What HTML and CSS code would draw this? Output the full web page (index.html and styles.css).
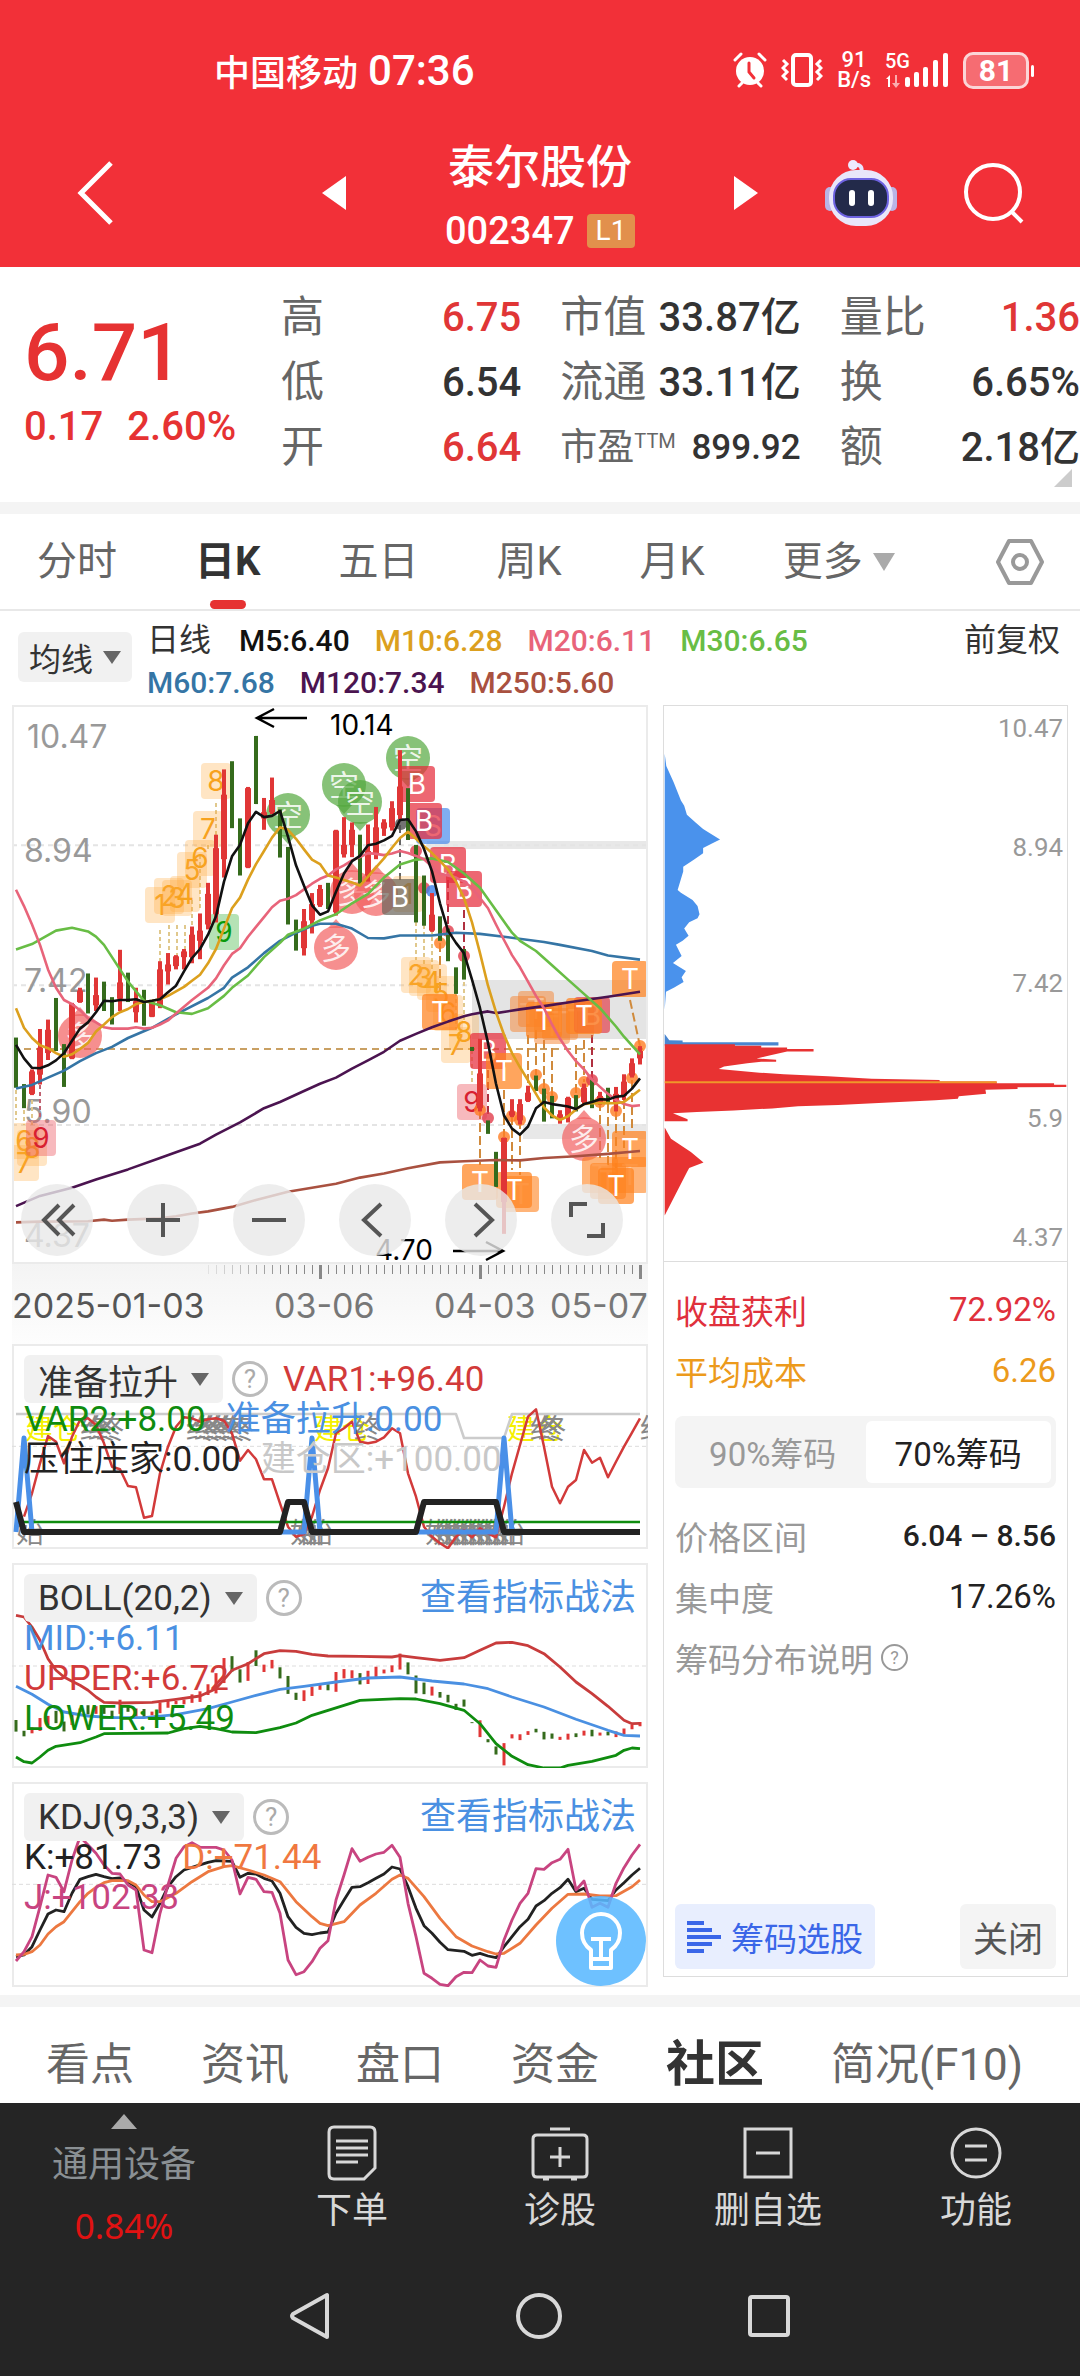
FILE: index.html
```html
<!DOCTYPE html>
<html lang="zh-CN">
<head>
  <meta charset="UTF-8">
  <meta name="viewport" content="width=device-width, initial-scale=1.0">
  <title>泰尔股份 002347</title>
  <link rel="stylesheet" href="styles.css">
</head>
<body>
  <header class="header">
    <div class="status">
      <div class="status__left"><span>中国移动</span><span class="status__time">07:36</span></div>
      <div class="status__right">
        <svg width="34" height="36" viewBox="0 0 34 36" fill="none" stroke="#fff" stroke-width="3" stroke-linecap="round">
          <circle cx="17" cy="19" r="14" fill="#fff" stroke="none"/>
          <path d="M2 8l6-6M32 8l-6-6M6 34l3-3M28 34l-3-3"/>
          <path d="M16 11v9l5 6" stroke="#f23038"/>
        </svg>
        <svg width="42" height="36" viewBox="0 0 42 36" fill="none" stroke="#fff" stroke-width="3">
          <rect x="12" y="3" width="18" height="30" rx="3" stroke-width="4"/>
          <path d="M2 8l4 4-4 4 4 4-4 4 4 4M40 8l-4 4 4 4-4 4 4 4-4 4"/>
        </svg>
        <div class="status__speed"><span>91</span><span>B/s</span></div>
        <div class="status__signal">
          <svg width="64" height="36" viewBox="0 0 64 36" fill="#fff">
            <path d="M1 27l4-4v12H3v-8z"/><path d="M10 23h2v8h3l-4 5-4-5h3z" opacity=".6"/>
            <rect x="20" y="25" width="5" height="10" rx="2"/><rect x="29" y="20" width="5" height="15" rx="2"/>
            <rect x="38" y="15" width="5" height="20" rx="2"/><rect x="48" y="8" width="5" height="27" rx="2"/>
            <rect x="58" y="1" width="5" height="34" rx="2"/>
          </svg>
          <span class="status__net">5G</span>
        </div>
        <div class="battery">81</div>
      </div>
    </div>
    <div class="titlebar">
      <div class="titlebar__side titlebar__side--left">
        <button class="icon-btn" aria-label="返回"><svg width="38" height="66" viewBox="0 0 38 66" fill="none" stroke="#fff" stroke-width="5"><path d="M35 3L5 33l30 30"/></svg></button>
        <button class="icon-btn" aria-label="上一只"><svg width="24" height="36" viewBox="0 0 24 36"><path d="M24 1v34L0 18z" fill="#fff"/></svg></button>
      </div>
      <div class="stock">
        <h1>泰尔股份</h1>
        <div class="stock__code">002347<span class="stock__level">L1</span></div>
      </div>
      <div class="titlebar__side titlebar__side--right">
        <button class="icon-btn" aria-label="下一只"><svg width="24" height="36" viewBox="0 0 24 36"><path d="M0 1v34l24-17z" fill="#fff"/></svg></button>
        <button class="icon-btn" aria-label="智能助手">
          <svg width="72" height="68" viewBox="0 0 72 68">
            <path d="M36 14c2-6-1-9-7-8" fill="none" stroke="#e8e4ff" stroke-width="4"/><circle cx="28" cy="6" r="5" fill="#eeeaff"/>
            <rect x="0" y="28" width="10" height="24" rx="5" fill="#b9b4e6"/><rect x="62" y="28" width="10" height="24" rx="5" fill="#b9b4e6"/>
            <rect x="4" y="11" width="64" height="56" rx="27" fill="#e9e6fa"/>
            <rect x="9" y="20" width="54" height="38" rx="17" fill="#232a4a" stroke="#6d62e0" stroke-width="2"/>
            <rect x="24" y="31" width="6" height="16" rx="3" fill="#fff"/><rect x="43" y="31" width="6" height="16" rx="3" fill="#fff"/>
          </svg>
        </button>
        <button class="icon-btn" aria-label="搜索"><svg width="62" height="62" viewBox="0 0 62 62" fill="none" stroke="#fff" stroke-width="4"><circle cx="30" cy="30" r="27"/><path d="M49 50l10 10"/></svg></button>
      </div>
    </div>
  </header>

  <section class="quote">
    <div class="quote__price">
      <strong>6.71</strong>
      <div class="quote__change"><span>0.17</span><span>2.60%</span></div>
    </div>
    <dl class="quote__col">
      <div><dt>高</dt><dd class="up">6.75</dd></div>
      <div><dt>低</dt><dd>6.54</dd></div>
      <div><dt>开</dt><dd class="up">6.64</dd></div>
    </dl>
    <dl class="quote__col">
      <div><dt>市值</dt><dd>33.87亿</dd></div>
      <div><dt>流通</dt><dd>33.11亿</dd></div>
      <div class="quote__small"><dt>市盈<sup>TTM</sup></dt><dd>899.92</dd></div>
    </dl>
    <dl class="quote__col">
      <div><dt>量比</dt><dd class="up">1.36</dd></div>
      <div><dt>换</dt><dd>6.65%</dd></div>
      <div><dt>额</dt><dd>2.18亿</dd></div>
    </dl>
  </section>

  <nav class="period">
    <a href="#">分时</a>
    <a href="#" class="period--active">日K</a>
    <a href="#">五日</a>
    <a href="#">周K</a>
    <a href="#">月K</a>
    <a href="#" class="period__more">更多<i class="caret caret--light"></i></a>
    <button class="icon-btn period__set" aria-label="设置">
      <svg width="50" height="48" viewBox="0 0 50 48" fill="none" stroke="#999" stroke-width="4"><path d="M14 3h22l11 21-11 21H14L3 24z" stroke-linejoin="round"/><circle cx="25" cy="24" r="7"/></svg>
    </button>
  </nav>

  <section class="ma">
    <button class="chip chip--small">均线<i class="caret"></i></button>
    <div class="ma__list">
      <span class="ma__name">日线</span><span class="c-black">M5:6.40</span><span class="c-orange">M10:6.28</span><span class="c-pink">M20:6.11</span><span class="c-green">M30:6.65</span>
      <br>
      <span class="c-blue">M60:7.68</span><span class="c-purple">M120:7.34</span><span class="c-brown">M250:5.60</span>
    </div>
    <a href="#" class="ma__adjust">前复权</a>
  </section>

  <main class="charts">
    <div class="charts__left">
      <div class="kline">
        <svg id="kline" viewBox="12 705 636 559"></svg>
        <div class="kline__tools">
          <button aria-label="最早"><svg viewBox="0 0 40 40"><path d="M22 5L7 20l15 15M37 5L22 20l15 15"/></svg></button>
          <button aria-label="放大"><svg viewBox="0 0 40 40"><path d="M20 3v34M3 20h34"/></svg></button>
          <button aria-label="缩小"><svg viewBox="0 0 40 40"><path d="M3 20h34"/></svg></button>
          <button aria-label="左移"><svg viewBox="0 0 40 40"><path d="M26 4L9 20l17 16"/></svg></button>
          <button aria-label="右移"><svg viewBox="0 0 40 40"><path d="M14 4l17 16-17 16"/></svg></button>
          <button aria-label="全屏"><svg viewBox="0 0 40 40"><path d="M4 17V4h16M36 23v13H20"/></svg></button>
        </div>
      </div>
      <div class="axis">
        <svg id="ticks" viewBox="12 0 636 16"></svg>
        <div class="axis__dates"><span>2025-01-03</span><span>03-06</span><span>04-03</span><span>05-07</span></div>
      </div>

      <div class="panel">
        <svg id="lift" class="panel__plot" viewBox="12 0 636 205"></svg>
        <div class="panel__head">
          <button class="chip">准备拉升<i class="caret"></i></button>
          <button class="help" aria-label="说明">?</button>
          <span class="c-red">VAR1:+96.40</span>
        </div>
        <div class="panel__row"><span class="c-lower">VAR2:+8.00</span><span class="c-sky">准备拉升:0.00</span></div>
        <div class="panel__row"><span class="c-ink">压住庄家:0.00</span><span class="c-gray">建仓区:+100.00</span></div>
      </div>

      <div class="panel">
        <svg id="boll" class="panel__plot" viewBox="12 0 636 205"></svg>
        <div class="panel__head">
          <button class="chip">BOLL(20,2)<i class="caret"></i></button>
          <button class="help" aria-label="说明">?</button>
          <a href="#" class="panel__link">查看指标战法</a>
        </div>
        <div class="panel__row"><span class="c-sky">MID:+6.11</span></div>
        <div class="panel__row"><span class="c-red">UPPER:+6.72</span></div>
        <div class="panel__row"><span class="c-lower">LOWER:+5.49</span></div>
      </div>

      <div class="panel">
        <svg id="kdj" class="panel__plot" viewBox="12 0 636 205"></svg>
        <div class="panel__head">
          <button class="chip">KDJ(9,3,3)<i class="caret"></i></button>
          <button class="help" aria-label="说明">?</button>
          <a href="#" class="panel__link">查看指标战法</a>
        </div>
        <div class="panel__row"><span class="c-ink">K:+81.73</span><span class="c-d">D:+71.44</span></div>
        <div class="panel__row"><span class="c-j">J:+102.33</span></div>
        <button class="bulb" aria-label="提示">
          <svg width="44" height="60" viewBox="0 0 44 60" fill="none" stroke="#fff" stroke-width="4" stroke-linejoin="round"><path d="M12 48V39C5 34 3 28 3 22a19 19 0 0 1 38 0c0 6-2 12-9 17v9zM12 48v9h20v-9M12 28h20M22 28v20"/></svg>
        </button>
      </div>
    </div>

    <aside class="cost">
      <svg id="cost" viewBox="663 705 405 558"></svg>
      <div class="cost__info">
        <div class="cost__row c-win"><span>收盘获利</span><span>72.92%</span></div>
        <div class="cost__row c-avg"><span>平均成本</span><span>6.26</span></div>
        <div class="switch"><button>90%筹码</button><button class="switch--on">70%筹码</button></div>
        <div class="cost__row"><span>价格区间</span><b>6.04 – 8.56</b></div>
        <div class="cost__row"><span>集中度</span><em>17.26%</em></div>
        <div class="cost__row cost__note"><span>筹码分布说明</span><button class="help help--small" aria-label="说明">?</button></div>
        <div class="cost__actions">
          <button class="cost__pick"><svg width="34" height="32" viewBox="0 0 34 32" stroke="#3a66e8" stroke-width="4"><path d="M0 2h17M0 9h25M0 16h34M0 23h25M0 30h17"/></svg>筹码选股</button>
          <button class="cost__close">关闭</button>
        </div>
      </div>
    </aside>
  </main>

  <nav class="tabs">
    <a href="#">看点</a>
    <a href="#">资讯</a>
    <a href="#">盘口</a>
    <a href="#">资金</a>
    <a href="#" class="tabs--active">社区</a>
    <a href="#">简况(F10)</a>
  </nav>

  <footer class="footer">
    <div class="toolbar">
      <a href="#" class="toolbar__index"><i class="caret caret--up"></i><span>通用设备</span><b>0.84%</b></a>
      <a href="#"><svg width="50" height="56" viewBox="0 0 50 56"><path d="M7 2h36q5 0 5 5v36L37 54H7q-5 0-5-5V7q0-5 5-5zM9 16h32M9 23h32M9 30h32M9 37h22"/></svg>下单</a>
      <a href="#"><svg width="58" height="56" viewBox="0 0 58 56"><path d="M19 4h20M6 10h46q4 0 4 4v34q0 4-4 4H6q-4 0-4-4V14q0-4 4-4zM29 22v20M19 32h20M12 54h6M40 54h6"/></svg>诊股</a>
      <a href="#"><svg width="50" height="56" viewBox="0 0 50 56"><path d="M2 4h46v48H2zM13 28h24"/></svg>删自选</a>
      <a href="#"><svg width="52" height="56" viewBox="0 0 52 56"><circle cx="26" cy="28" r="24"/><path d="M15 21h22M15 35h22"/></svg>功能</a>
    </div>
    <div class="system">
      <button class="icon-btn" aria-label="返回"><svg width="42" height="50" viewBox="0 0 42 50"><path d="M38 4v42L4 27q-2-2 0-4z"/></svg></button>
      <button class="icon-btn" aria-label="主页"><svg width="48" height="50" viewBox="0 0 48 50"><circle cx="24" cy="25" r="21"/></svg></button>
      <button class="icon-btn" aria-label="最近"><svg width="44" height="50" viewBox="0 0 44 50"><rect x="3" y="6" width="38" height="38" rx="2"/></svg></button>
    </div>
  </footer>
  <script src="chart.js"></script>
</body>
</html>
```
FILE: styles.css
```css
* {
  box-sizing: border-box;
}

body {
  margin: 0;
  background: #fff;
  color: #333;
  font-family: Roboto, "Noto Sans CJK SC", sans-serif;
}

a {
  color: inherit;
  text-decoration: none;
}

button {
  padding: 0;
  border: none;
  background: none;
  color: inherit;
  font: inherit;
}

svg {
  display: block;
}

/* header */
.header {
  background: #f23038;
  color: #fff;
}

.status {
  display: flex;
  justify-content: space-between;
  align-items: center;
  height: 118px;
  padding: 22px 45px 0 214px;
  font-size: 36px;
}

.status__left,
.status__right {
  display: flex;
  align-items: center;
}

.status__left {
  gap: 10px;
  font-weight: 500;
}

.status__time {
  font-size: 42px;
}

.status__right {
  gap: 14px;
}

.status__speed {
  display: flex;
  flex-direction: column;
  align-items: center;
  font-size: 22px;
  line-height: 20px;
  font-weight: 500;
}

.status__signal {
  position: relative;
}

.status__net {
  position: absolute;
  top: -1px;
  left: 0;
  font-size: 20px;
  line-height: 20px;
  font-weight: 500;
}

.battery {
  position: relative;
  width: 66px;
  height: 37px;
  margin-right: 6px;
  border: 3px solid #fbd5d7;
  border-radius: 10px;
  background: #f66c72;
  font-size: 30px;
  line-height: 32px;
  font-weight: 700;
  text-align: center;
}

.battery::after {
  content: "";
  position: absolute;
  top: 10px;
  right: -8px;
  width: 3px;
  height: 12px;
  border-radius: 2px;
  background: #fff;
}

.titlebar {
  display: grid;
  grid-template-columns: 1fr 190px 1fr;
  align-items: center;
  height: 149px;
}

.titlebar__side {
  display: flex;
  justify-content: space-between;
  align-items: center;
}

.titlebar__side--left {
  padding: 0 99px 0 76px;
}

.titlebar__side--right {
  padding: 0 55px 0 99px;
}

.stock {
  padding-top: 14px;
  text-align: center;
}

.stock h1 {
  margin: 0;
  font-size: 46px;
  line-height: 62px;
  font-weight: 500;
  white-space: nowrap;
}

.stock__code {
  display: flex;
  justify-content: space-between;
  align-items: center;
  font-size: 38px;
  line-height: 66px;
  font-weight: 500;
}

.stock__level {
  width: 48px;
  border-radius: 4px;
  background: #e2904c;
  font-size: 28px;
  line-height: 34px;
  font-weight: 400;
}

/* quote */
.quote {
  position: relative;
  display: grid;
  grid-template-columns: 242px 1fr 1fr 1fr;
  gap: 39px;
  height: 247px;
  padding-top: 18px;
  border-bottom: 12px solid #f4f4f4;
}

.quote::after {
  content: "";
  position: absolute;
  right: 8px;
  bottom: 15px;
  border-left: 18px solid transparent;
  border-bottom: 18px solid #ccc;
}

.quote__price {
  padding: 22px 0 0 24px;
  color: #e63232;
  font-weight: 500;
  white-space: nowrap;
}

.quote__price strong {
  display: block;
  font-size: 80px;
  line-height: 92px;
  font-weight: 500;
}

.quote__change {
  display: flex;
  gap: 24px;
  font-size: 40px;
  line-height: 56px;
}

.quote__col {
  margin: 0;
  font-size: 40px;
  line-height: 65px;
}

.quote__col div {
  display: flex;
  justify-content: space-between;
  height: 65px;
}

.quote__col dt {
  color: #666;
  font-size: 43px;
}

.quote__col dd {
  margin: 0;
  font-weight: 500;
  white-space: nowrap;
}

.quote__col .up {
  color: #e03636;
}

.quote__small dt {
  display: flex;
  font-size: 37px;
}

.quote__small dd {
  font-size: 35px;
}

.quote__small sup {
  font-size: 20px;
  line-height: 52px;
}

/* period tabs */
.period {
  display: flex;
  align-items: center;
  gap: 78px;
  height: 97px;
  padding: 0 35px 0 37px;
  border-bottom: 2px solid #e8e8e8;
  color: #666;
  font-size: 40px;
  line-height: 95px;
  white-space: nowrap;
}

.period--active {
  position: relative;
  color: #333;
  font-weight: 700;
}

.period--active::after {
  content: "";
  position: absolute;
  left: 50%;
  bottom: 0;
  width: 36px;
  height: 9px;
  margin-left: -18px;
  border-radius: 5px;
  background: #e63232;
}

.period__more {
  display: flex;
  align-items: center;
  gap: 10px;
}

.period__set {
  margin-left: auto;
}

.caret {
  display: inline-block;
  border: 9px solid transparent;
  border-top: 13px solid #666;
  border-bottom: none;
}

.caret--light {
  border-width: 18px 11px 0;
  border-top-color: #aaa;
}

.caret--up {
  border-width: 0 13px 15px;
  border-bottom: 15px solid #aaa;
}

/* moving averages */
.ma {
  display: flex;
  align-items: flex-start;
  height: 94px;
  padding: 8px 20px 0 18px;
  font-size: 30px;
}

.ma__list {
  flex: 1;
  margin-left: 15px;
  line-height: 42px;
  font-weight: 500;
  white-space: nowrap;
}

.ma__list span {
  margin-right: 25px;
}

.ma__list .ma__name {
  margin-right: 28px;
  font-size: 32px;
  font-weight: 400;
}

.ma__adjust {
  font-size: 32px;
  line-height: 42px;
}

.chip {
  display: flex;
  align-items: center;
  gap: 13px;
  height: 48px;
  padding: 0 14px;
  border-radius: 6px;
  background: #f1f1f1;
  color: #333;
  font-size: 35px;
}

.chip--small {
  gap: 10px;
  height: 50px;
  margin-top: 13px;
  padding: 0 11px;
  font-size: 32px;
}

.help {
  flex: none;
  width: 36px;
  height: 36px;
  border: 3px solid #bbb;
  border-radius: 50%;
  color: #aaa;
  font-size: 26px;
  line-height: 30px;
}

.help--small {
  width: 27px;
  height: 27px;
  border-width: 2px;
  border-color: #999;
  color: #999;
  font-size: 18px;
  line-height: 22px;
}

/* charts */
.charts {
  display: grid;
  grid-template-columns: 636fr 405fr;
  gap: 15px;
  padding: 0 12px;
}

.kline {
  position: relative;
}

.kline__tools {
  position: absolute;
  left: 9px;
  bottom: 8px;
  display: flex;
  gap: 34px;
}

.kline__tools button {
  display: flex;
  justify-content: center;
  align-items: center;
  width: 72px;
  height: 72px;
  border-radius: 50%;
  background: rgba(232, 232, 232, 0.8);
}

.kline__tools svg {
  width: 40px;
  fill: none;
  stroke: #555;
  stroke-width: 4;
}

.axis {
  height: 80px;
  background: linear-gradient(#f4f4f4, #fdfdfd);
}

.axis__dates {
  display: grid;
  grid-template-columns: 1fr 160px 116px 98px;
  color: #777;
  font-family: Inter, sans-serif;
  font-size: 34px;
  line-height: 52px;
  white-space: nowrap;
}

.axis__dates span:first-child {
  color: #555;
}

.panel {
  position: relative;
  aspect-ratio: 636 / 205;
  margin-bottom: 14px;
  padding: 11px 12px 0;
  font-size: 35px;
}

.panel:last-child {
  margin-bottom: 0;
}

.panel__plot {
  position: absolute;
  inset: 0;
  width: 100%;
  height: 100%;
}

.panel__head {
  position: relative;
  display: flex;
  align-items: center;
  gap: 9px;
}

.panel__head .c-red {
  margin-left: 6px;
}

.panel__link {
  margin-left: auto;
  color: #4a90e2;
  font-size: 36px;
  line-height: 48px;
}

.panel__row {
  position: relative;
  display: flex;
  gap: 20px;
  height: 40px;
  line-height: 34px;
  white-space: nowrap;
}

.bulb {
  position: absolute;
  right: 2px;
  bottom: 1px;
  display: flex;
  justify-content: center;
  align-items: center;
  width: 90px;
  height: 90px;
  border-radius: 50%;
  background: rgba(90, 184, 255, 0.88);
}

/* cost distribution */
.cost {
  display: flex;
  flex-direction: column;
  margin-bottom: 10px;
  border: 1px solid #ddd;
}

.cost__info {
  flex: 1;
  display: flex;
  flex-direction: column;
  padding: 17px 11px 7px;
  border-top: 1px solid #ddd;
  color: #999;
  font-size: 33px;
}

.cost__row {
  display: flex;
  justify-content: space-between;
  align-items: center;
  height: 61px;
}

.cost__row b {
  color: #222;
  font-size: 30px;
  font-weight: 500;
}

.cost__row em {
  color: #222;
  font-style: normal;
}

.cost__note {
  justify-content: flex-start;
  gap: 8px;
}

.switch {
  display: grid;
  grid-template-columns: 1fr 1fr;
  height: 72px;
  margin: 15px 0 17px;
  padding: 5px;
  border-radius: 8px;
  background: #f4f4f4;
}

.switch--on {
  border-radius: 6px;
  background: #fff;
  color: #222;
}

.cost__actions {
  display: flex;
  justify-content: space-between;
  margin-top: auto;
}

.cost__actions button {
  height: 65px;
  border-radius: 6px;
}

.cost__pick {
  display: flex;
  align-items: center;
  gap: 10px;
  padding: 0 12px;
  background: #e8eefe;
  color: #3a66e8;
}

.cost__actions .cost__close {
  width: 96px;
  background: #f4f4f4;
  color: #555;
  font-size: 35px;
}

/* bottom tabs */
.tabs {
  display: flex;
  align-items: center;
  gap: 67px;
  height: 108px;
  margin-top: 8px;
  padding: 19px 0 0 46px;
  border-top: 12px solid #f4f4f4;
  color: #666;
  font-size: 44px;
  line-height: 60px;
  white-space: nowrap;
}

.tabs .tabs--active {
  color: #333;
  font-size: 49px;
  font-weight: 700;
}

.footer {
  background: #252525;
  color: #d8d8d8;
}

.toolbar {
  display: grid;
  grid-template-columns: 248fr repeat(4, 208fr);
  height: 153px;
  font-size: 36px;
}

.toolbar a {
  display: flex;
  flex-direction: column;
  align-items: center;
  padding-top: 22px;
  line-height: 60px;
}

.toolbar svg,
.system svg {
  fill: none;
  stroke: #d8d8d8;
  stroke-width: 3;
}

.toolbar .toolbar__index {
  padding-top: 11px;
  color: #8a9094;
}

.toolbar__index span {
  line-height: 72px;
}

.toolbar__index b {
  color: #e01212;
  font-family: "Noto Sans", sans-serif;
  font-size: 35px;
  line-height: 50px;
  font-weight: 400;
}

.system {
  display: flex;
  justify-content: center;
  align-items: center;
  gap: 184px;
  height: 120px;
}

.system svg {
  stroke-width: 4;
  stroke-linejoin: round;
}

/* series colours */
.c-black { color: #111; }
.c-ink { color: #222; }
.c-orange { color: #dca01e; }
.c-pink { color: #e8647a; }
.c-green { color: #68bd45; }
.c-blue { color: #3575a5; }
.c-purple { color: #4b1450; }
.c-brown { color: #a95140; }
.c-red { color: #d23a3a; }
.c-lower { color: #0f8c0f; }
.c-sky { color: #4a90e2; }
.c-gray { color: #c8c8c8; }
.c-d { color: #f07840; }
.c-j { color: #c84480; }
.c-win { color: #e0303c; }
.c-avg { color: #ec9a1c; }
```
FILE: chart.js
```js
// [high, top, bottom, low, up?] in scale units, one per trading day
const candles = [
  [827,840,945,950,0],[941,950,975,1000,0],[905,910,965,968,1],[806,852,918,942,1],[783,808,865,882,1],[730,828,855,860,0],
  [843,868,890,948,0],[742,745,878,880,1],[705,712,740,742,1],[670,712,740,768,0],[680,723,748,762,1],[690,702,732,762,0],
  [728,738,755,795,0],[612,692,732,762,1],[668,682,715,740,0],[705,738,765,790,1],[710,738,795,798,0],[738,740,776,777,1],
  [640,660,750,755,1],[620,648,665,697,1],[625,628,652,660,1],[610,616,630,660,1],[555,575,630,645,1],[523,565,590,635,1],
  [448,475,550,562,1],[330,363,525,545,1],[170,232,390,435,1],[150,228,258,314,0],[290,302,415,430,0],[213,216,410,412,1],
  [88,115,238,255,0],[240,275,290,318,1],[190,245,275,280,1],[268,275,348,386,0],[360,362,548,550,0],[538,560,572,614,0],
  [512,542,608,626,1],[473,500,540,572,1],[453,463,503,507,1],[448,470,500,512,0],[318,320,520,528,1],[287,355,378,386,1],
  [300,318,355,385,1],[330,350,408,450,0],[305,370,430,445,1],[262,312,378,390,1],[292,300,315,333,1],[248,265,312,320,1],
  [123,212,282,292,1],[216,258,318,343,0],[355,368,530,545,0],[430,475,535,553,0],[473,526,565,568,1],[530,545,585,590,0],
  [560,575,630,640,0],[655,660,690,720,0],[610,635,665,685,0],[850,852,856,860,0],[830,915,1000,1008,1],[1030,1040,1055,1063,0],
  [1107,1130,1185,1193,0],[1072,1073,1230,1308,1],[978,1008,1018,1022,1],[978,990,1030,1040,1],[945,962,982,985,1],[920,932,950,958,0],
  [952,970,1010,1033,0],[970,990,1010,1025,0],[1005,1015,1025,1038,1],[972,975,1020,1035,1],[968,975,1000,1008,0],[940,950,985,992,1],
  [930,950,990,1000,0],[960,970,988,992,1],[950,965,985,990,0],[948,965,990,1008,1],[917,935,970,980,1],[878,890,920,925,1],[848,860,878,893,1]
];

// "day,value day,value ..." pairs
const ma = [
  ['#a95140', '0,1280 3,1278 9,1277 11,1273 12,1276 14,1273 18,1270 20,1265 22,1258 24,1253 27,1242 30,1225 34,1205 37,1195 40,1185 43,1170 46,1160 49,1147 53,1133 56,1130 60,1127 63,1128 66,1122 70,1118 74,1112 78,1105'],
  ['#4b1450', '0,1240 3,1215 7,1195 10,1175 14,1150 18,1122 20,1108 23,1087 25,1065 28,1035 31,1000 33,985 36,958 38,940 40,925 42,903 44,883 46,862 48,835 50,818 52,802 54,788 56,775 57,770 59,763 60,767 63,758 66,750 70,738 74,727 78,715'],
  ['#3575a5', '0,952 2,943 4,925 6,908 8,885 10,865 12,850 14,828 17,803 20,770 24,730 26,705 27,680 29,655 31,620 33,590 35,570 37,553 38,548 40,548 42,560 44,583 46,584 48,577 52,577 55,570 58,573 61,580 66,593 68,600 72,615 74,626 78,636'],
  ['#68bd45', '0,611 2,598 5,565 7,558 9,567 10,580 11,600 12,630 13,660 14,690 16,737 18,748 20,765 22,769 24,755 26,725 27,705 29,675 31,630 33,595 34,575 36,560 38,540 40,525 42,498 44,475 46,435 48,403 50,391 52,388 54,397 56,425 58,460 60,515 62,570 63,590 65,615 67,650 69,685 71,720 73,755 75,800 76,825 78,868'],
  ['#e8647a', '0,465 1,505 2,550 3,600 4,660 5,705 6,735 7,745 8,760 9,780 10,790 11,802 12,805 14,805 15,802 16,805 17,803 18,795 19,785 20,768 22,735 24,705 25,682 26,650 27,622 28,608 29,580 30,556 31,532 32,508 33,492 34,487 35,478 36,464 37,450 38,438 39,430 40,415 41,405 42,393 43,385 44,375 45,377 46,380 47,376 48,370 49,375 50,382 51,390 52,408 53,425 54,430 55,435 56,445 57,460 58,485 59,510 60,550 61,588 62,625 63,655 64,690 65,725 66,755 67,795 68,830 69,860 70,885 71,905 72,930 73,948 74,965 75,980 76,990 77,995 78,993'],
  ['#dca01e', '0,755 1,803 2,828 3,846 4,853 5,865 6,874 7,868 8,855 9,840 10,812 11,795 12,777 13,765 14,757 15,745 16,740 17,737 18,733 19,725 20,714 21,703 22,688 23,673 24,645 25,610 26,560 27,510 28,484 29,440 30,402 31,370 32,337 33,312 34,318 35,340 36,366 37,391 38,402 39,430 40,435 41,441 42,447 43,455 44,433 45,410 46,388 47,362 48,338 49,323 50,340 51,358 52,375 53,395 54,415 55,445 56,485 57,545 58,620 59,700 60,765 61,820 62,865 63,900 64,932 65,965 66,998 67,1018 68,1029 69,1020 70,1003 71,990 72,987 75,988 76,985 77,970 78,955'],
  ['#111', '0,845 1,878 2,901 3,902 4,895 5,883 6,865 7,835 8,805 9,790 10,765 11,737 12,738 13,735 14,735 15,733 16,740 17,737 18,733 19,716 20,700 21,665 22,632 23,610 24,575 25,530 26,445 27,383 28,355 29,302 30,274 31,287 32,284 33,272 34,335 35,405 36,455 37,503 38,526 39,518 40,470 41,425 42,395 43,382 44,356 45,352 46,344 47,333 48,294 49,292 50,322 51,365 52,420 53,498 54,565 55,595 56,620 57,685 58,755 59,840 60,940 61,1018 62,1050 63,1065 64,1045 65,1000 66,985 67,990 68,993 69,996 70,1002 71,990 72,985 73,978 74,979 75,972 76,970 77,952 78,927']
];

const dayX = i => 16 + 8 * i;
const priceY = v => 700 + v / 2.45;
const UP = '#e03636';
const DOWN = '#356b1c';

function points(data, toY) {
  return data.split(' ').map(p => {
    const [i, v] = p.split(',').map(Number);
    return dayX(i) + ',' + toY(v).toFixed(1);
  }).join(' ');
}

function line(data, color, width, toY) {
  return `<polyline points="${points(data, toY)}" fill="none" stroke="${color}" stroke-width="${width}" stroke-linejoin="round"/>`;
}

function seg(x1, y1, x2, y2, color, width, dash) {
  return `<line x1="${x1}" y1="${y1}" x2="${x2}" y2="${y2}" stroke="${color}" stroke-width="${width}" stroke-dasharray="${dash || 'none'}"/>`;
}

function text(x, y, str, color, size, anchor, font) {
  return `<text x="${x}" y="${y}" fill="${color}" font-size="${size}" text-anchor="${anchor || 'start'}" font-family="${font || 'Inter'}, 'Noto Sans CJK SC', sans-serif">${str}</text>`;
}

// square flag with its letter
function tag(x, y, str, fill, color, w) {
  return `<rect x="${x - w / 2}" y="${y - 18}" width="${w}" height="36" rx="4" fill="${fill}"/>` + text(x, y + 10, str, color, 28, 'middle');
}

function badge(x, y, str, fill, dir) {
  return `<circle cx="${x}" cy="${y}" r="22" fill="${fill}"/><path d="M${x - 8} ${y + 20 * dir}h16l-8 ${9 * dir}z" fill="${fill}"/>` +
    text(x, y + 11, str, 'rgba(255,255,255,.85)', 30, 'middle');
}

function drawKline() {
  let s = '';
  s += '<rect x="427" y="841" width="221" height="8" fill="#e8e8e8"/><rect x="472" y="980" width="176" height="59" fill="#e4e4e4"/><rect x="523" y="1124" width="125" height="15" fill="#e8e8e8"/>';
  [356, 699, 1041].forEach(v => { s += seg(12, priceY(v), 648, priceY(v), '#e4e4e4', 2, '5 4'); });
  s += seg(12, priceY(855), 648, priceY(855), '#c9a063', 2, '7 5');
  [['10.47', 27, 748], ['8.94', 24, 862], ['7.42', 24, 992], ['5.90', 24, 1123], ['4.37', 24, 1247]].forEach(t => {
    s += text(t[1], t[2], t[0], '#999', 32);
  });

  // guide lines down to the markers
  [[208,845,852],[200,855,910],[192,900,935],[185,925,950],[177,925,955],[169,925,955],[160,930,965],[216,803,835],[24,1110,1125],[32,1100,1125],
   [416,922,960],[424,925,965],[432,930,970],[16,1090,1120],[456,985,1030],[464,982,1020],[472,1050,1085]].forEach(g => {
    s += seg(g[0], g[1], g[0], g[2], '#e0c88c', 2, '4 3');
  });
  s += seg(400, 825, 400, 880, '#666', 2, '8 4') + seg(464, 910, 464, 955, '#b03040', 2, '8 4') + seg(448, 880, 448, 930, '#b03040', 2, '8 4') +
    seg(40, 1085, 40, 1120, '#c06070', 2, '4 3') + seg(488, 1070, 488, 1118, '#b03040', 2, '8 4') + seg(592, 1035, 592, 1080, '#b03040', 2, '8 4');
  [[440,943,995],[480,1110,1165],[504,1090,1137],[512,1116,1170],[520,1120,1175],[528,1035,1090],[536,1030,1075],[544,1040,1089],[552,1048,1097],
   [576,1045,1093],[584,1040,1082],[600,1102,1158],[608,1104,1165],[616,1111,1168],[624,1100,1150],[632,1080,1130]].forEach(g => {
    s += seg(g[0], g[1], g[0], g[2], '#d08a3c', 2, '9 4');
  });
  s += seg(630, 1000, 640, 1046, '#d08a3c', 2, '9 4');

  // long / short circles
  const green = 'rgba(84,168,62,.7)';
  const red = 'rgba(242,95,95,.7)';
  s += badge(288, 815, '空', green, 1) + badge(344, 785, '空', green, 1) + badge(360, 802, '空', green, 1) + badge(408, 758, '空', green, 1);
  s += badge(80, 1036, '多', red, -1) + badge(352, 892, '多', red, -1) + badge(376, 894, '多', red, -1) + badge(336, 948, '多', red, -1) + badge(584, 1139, '多', red, -1);

  // nine-turn counts
  [[160,905,1],[169,896,2],[177,898,3],[185,894,4],[192,870,5],[200,858,6],[208,829,7],[216,781,8],[24,1141,6],[24,1163,7],[32,1148,8],
   [408,894,1],[416,975,2],[424,978,3],[432,982,4],[441,994,5],[448,1013,6],[456,1045,7],[464,1032,8]].forEach(n => {
    s += tag(n[0], n[1], n[2], 'rgba(255,170,60,.3)', '#f7a21e', 30);
  });
  s += tag(224, 932, 9, 'rgba(90,190,90,.45)', '#0a9a0a', 30) + tag(41, 1138, 9, 'rgba(235,80,90,.4)', '#d82030', 30) + tag(472, 1102, 9, 'rgba(235,80,90,.4)', '#d82030', 30);

  // trade flags
  [[528,1014],[536,1009],[552,1026],[560,1022],[576,1020]].forEach(t => { s += tag(t[0], t[1], 'T', 'rgba(245,130,45,.5)', 'rgba(255,255,255,.4)', 36); });
  [[600,1175],[608,1181],[630,1175],[521,1194]].forEach(t => { s += tag(t[0], t[1], 'T', 'rgba(255,130,30,.6)', 'rgba(255,255,255,.3)', 36); });
  s += tag(433, 826, 'S', 'rgba(60,130,235,.65)', '#fff', 34);
  s += tag(592, 1015, 'B', 'rgba(225,50,65,.65)', 'rgba(255,255,255,.5)', 36);
  [[417,784],[424,821],[448,865],[464,889],[488,1051]].forEach(t => { s += tag(t[0], t[1], 'B', 'rgba(230,45,60,.72)', '#fff', 36); });
  s += tag(400, 897, 'B', 'rgba(105,100,90,.7)', '#fff', 36);
  [[440,1012],[504,1071],[480,1182],[514,1190],[544,1020],[584,1016],[630,979],[630,1149],[616,1186]].forEach(t => {
    s += tag(t[0], t[1], 'T', 'rgba(255,130,30,.72)', '#fff', 36);
  });

  [[440,943],[480,1110],[504,1137],[512,1116],[520,1120],[536,1075],[544,1089],[552,1097],[576,1093],[584,1082],[600,1102],[616,1111],[632,1078],[640,1046]].forEach(d => {
    s += `<circle cx="${d[0]}" cy="${d[1]}" r="6" fill="rgba(255,125,35,.8)"/>`;
  });
  [[416,851],[424,888],[448,931],[464,956],[488,1118],[592,1080]].forEach(d => { s += `<circle cx="${d[0]}" cy="${d[1]}" r="6" fill="rgba(225,60,75,.8)"/>`; });
  s += '<circle cx="432" cy="891" r="6" fill="rgba(60,130,235,.8)"/><circle cx="401" cy="824" r="6" fill="rgba(80,80,80,.8)"/>';

  candles.forEach((c, i) => {
    const color = c[4] ? UP : DOWN;
    s += seg(dayX(i), priceY(c[0]), dayX(i), priceY(c[3]), color, 4) + seg(dayX(i), priceY(c[1]), dayX(i), priceY(c[2]), color, c[4] ? 6 : 4);
  });
  ma.forEach(m => { s += line(m[1], m[0], 2.6, priceY); });

  s += text(330, 735, '10.14', '#000', 28) + text(375, 1260, '4.70', '#000', 28);
  s += '<path d="M307 718h-50M274 709l-17 9 17 9M453 1251h50M486 1242l17 9-17 9" fill="none" stroke="#000" stroke-width="2.5"/>';
  s += '<rect x="13" y="706" width="634" height="557" fill="none" stroke="#ebebeb" stroke-width="2"/>';
  document.getElementById('kline').innerHTML = s;
}

function drawTicks() {
  let s = '';
  for (let i = 24; i < 79; i++) {
    const major = i === 38 || i === 58 || i === 78;
    s += `<rect x="${dayX(i) - (major ? 1 : 0)}" y="1" width="${major ? 3 : 1}" height="${major ? 14 : 9}" fill="#888" opacity="${Math.min(1, (i - 22) / 12)}"/>`;
  }
  document.getElementById('ticks').innerHTML = s;
}

const frame = '<rect x="13" y="1" width="634" height="203" fill="none" stroke="#ebebeb" stroke-width="2"/>';

function drawLift() {
  const y = v => (v - 42) / 3;
  let s = frame + seg(12, y(349), 648, y(349), '#ddd', 1, '4 3');
  [25, 314, 507].forEach(x => { s += text(x, 95, '建仓', '#f5f000', 28); });
  [80, 88, 96, 186, 194, 202, 210, 218, 226, 354, 530, 538, 640].forEach(x => { s += text(x, 95, '终', '#888', 28); });
  [16, 290, 297, 305, 425, 433, 441, 449, 457, 465, 473, 481, 489, 497].forEach(x => { s += text(x, 199, '始', '#888', 28); });
  s += line('0,252 55,252 56,324 61,324 62,252 78,252', '#ccc', 2.5, y);
  s += line('1,560 2,490 3,400 4,318 5,335 6,400 7,320 8,270 9,265 10,285 11,340 12,410 13,418 14,468 15,472 16,563 17,558 18,430 19,350 20,290 21,262 22,265 23,275 24,268 25,265 26,272 27,310 28,392 29,360 30,388 31,448 32,448 33,520 34,590 35,620 36,612 37,560 38,480 39,415 40,310 41,295 42,275 43,335 44,340 45,335 46,322 47,295 48,310 49,430 50,500 51,590 52,620 53,640 54,655 55,620 56,600 57,622 58,595 59,610 60,622 61,530 62,430 63,345 64,260 65,238 66,350 67,470 68,520 69,470 70,450 71,360 72,398 73,383 74,442 75,395 76,350 77,308 78,265', '#d23a3a', 2.5, y);
  s += line('1,576 78,576', '#0f8c0f', 2.5, y);
  ['0,606 1,324 2,606', '33,606 36,606 37,324 38,606', '50,606 60,606 61,324 62,606'].forEach(d => { s += line(d, '#4a90e8', 5, y); });
  s += line('0,516 1,606 33,606 34,516 36,516 37,606 50,606 51,516 60,516 61,606 78,606', '#222', 6, y);
  document.getElementById('lift').innerHTML = s;
}

function drawBoll() {
  const y = v => (v - 38) / 3;
  let s = frame + seg(12, y(347), 648, y(347), '#ddd', 1, '4 3');
  candles.forEach((c, i) => {
    s += seg(dayX(i), y(275 + c[0] * 0.283), dayX(i), y(275 + c[3] * 0.283), c[4] ? UP : DOWN, 3);
  });
  s += line('0,195 1,200 2,230 3,270 4,325 5,360 6,380 7,393 8,405 9,420 10,440 11,456 13,458 17,456 20,447 23,437 25,415 27,360 29,340 31,310 33,301 35,303 37,312 39,317 43,318 47,320 48,316 50,322 53,330 56,322 58,300 60,278 62,276 64,286 66,310 68,350 70,395 72,430 74,468 76,510 77,520 78,519', '#c83c3c', 2.8, y);
  s += line('0,408 2,432 4,462 6,485 9,497 12,502 16,502 20,493 24,475 27,455 30,435 33,417 36,408 40,395 44,383 48,380 52,392 56,401 59,415 62,440 66,470 70,507 74,540 76,555 78,557', '#4a90e2', 2.8, y);
  s += line('0,620 1,634 2,638 3,620 4,600 5,588 8,577 10,560 11,550 19,548 21,535 23,528 25,535 27,545 30,547 33,532 35,518 37,495 39,480 41,465 43,450 48,445 50,446 53,460 56,480 58,520 60,580 62,618 64,643 66,653 68,653 69,645 72,633 75,615 76,600 77,593 78,595', '#0f8c0f', 2.8, y);
  document.getElementById('boll').innerHTML = s;
}

function drawKdj() {
  const y = v => (v - 36) / 3;
  let s = frame + seg(12, y(343), 648, y(343), '#ddd', 1, '4 3');
  s += line('0,560 1,555 2,530 3,480 4,432 5,420 6,425 7,370 8,328 9,320 10,313 11,320 12,326 13,324 14,335 15,350 16,420 17,441 18,400 19,350 20,320 21,300 22,292 24,277 25,272 27,274 28,322 29,310 30,312 31,325 32,333 33,370 34,440 35,472 36,490 37,494 38,489 39,486 40,430 41,390 42,352 43,350 44,338 45,325 46,312 47,291 48,297 49,350 50,415 51,467 52,490 53,517 54,539 56,544 57,556 58,550 59,558 60,563 61,530 62,500 63,470 64,448 65,408 66,392 67,370 68,353 69,328 70,365 71,355 72,388 74,392 75,360 76,338 77,315 78,295', '#222', 2.8, y);
  s += line('0,555 1,553 2,545 3,525 4,492 5,470 6,455 7,425 8,395 9,370 10,352 11,338 12,332 14,332 15,345 16,375 17,395 18,395 20,370 22,335 24,305 26,290 27,287 29,300 31,315 33,335 35,395 37,440 38,460 39,467 41,455 43,405 45,370 47,328 48,315 49,325 51,380 53,445 55,500 57,528 59,545 60,552 61,550 63,520 65,465 67,415 69,373 71,372 73,378 75,377 77,350 78,330', '#ec7840', 2.8, y);
  s += line('0,573 1,545 2,500 3,410 4,315 5,322 6,365 7,270 8,200 9,225 10,250 11,285 12,310 13,312 14,345 15,360 16,540 17,548 18,430 19,345 20,265 21,230 22,218 23,232 25,232 26,240 27,270 28,372 29,322 30,328 31,365 32,367 33,430 34,570 35,614 36,605 37,575 38,535 39,512 40,390 41,315 42,236 43,274 44,262 45,252 46,247 47,226 48,262 49,400 50,500 51,610 52,625 53,643 54,647 55,620 56,607 57,608 58,570 59,588 60,592 61,510 62,450 63,400 64,370 65,296 66,298 67,278 68,268 69,238 70,360 71,333 72,412 73,400 74,412 75,340 76,293 77,255 78,223', '#c84480', 2.8, y);
  document.getElementById('kdj').innerHTML = s;
}

function drawCost() {
  // "width,value" outline of the chip profile
  const area = (data, color) => {
    const pts = data.split(' ').map(p => {
      const [w, v] = p.split(',').map(Number);
      return (650 + w / 3).toFixed(1) + ',' + priceY(v).toFixed(1);
    }).join(' ');
    return `<polygon points="${pts}" fill="${color}"/>`;
  };
  let s = area('41,130 46,160 68,200 90,245 100,258 108,280 135,300 157,315 170,322 208,341 185,350 157,362 157,375 130,390 97,408 97,420 80,465 90,472 125,490 140,505 146,525 140,535 115,545 100,560 113,578 95,590 75,600 92,628 66,645 105,665 92,680 98,692 70,705 45,716 41,760', '#4a92ec');
  s += area('41,820 55,835 95,836 95,840 384,840 384,848 41,848', '#4a86d0');
  s += area('41,845 253,845 253,849 332,849 332,853 410,853 410,857 490,857 490,863 410,863 360,872 318,880 377,883 377,888 332,888 290,892 220,900 204,906 270,911 327,915 400,919 533,924 665,930 870,933 870,937 1042,937 1042,941 1215,941 1215,945 1252,945 1252,950 1105,951 1105,955 1008,957 1010,967 928,973 925,979 857,983 686,990 564,995 443,998 365,1003 249,1008 138,1012 66,1015 110,1030 110,1035 41,1035', '#e83232');
  s += area('41,1050 60,1078 120,1110 158,1136 115,1150 108,1160 41,1267', '#e83232');
  s += area('41,936 1042,936 1042,941 41,941', '#f0962a');
  [['10.47', 736], ['8.94', 856], ['7.42', 992], ['5.9', 1128], ['4.37', 1248]].forEach(t => { s += text(1064, t[1], t[0], '#999', 26, 'end', 'Roboto'); });
  document.getElementById('cost').innerHTML = s;
}

drawKline();
drawTicks();
drawLift();
drawBoll();
drawKdj();
drawCost();
```
